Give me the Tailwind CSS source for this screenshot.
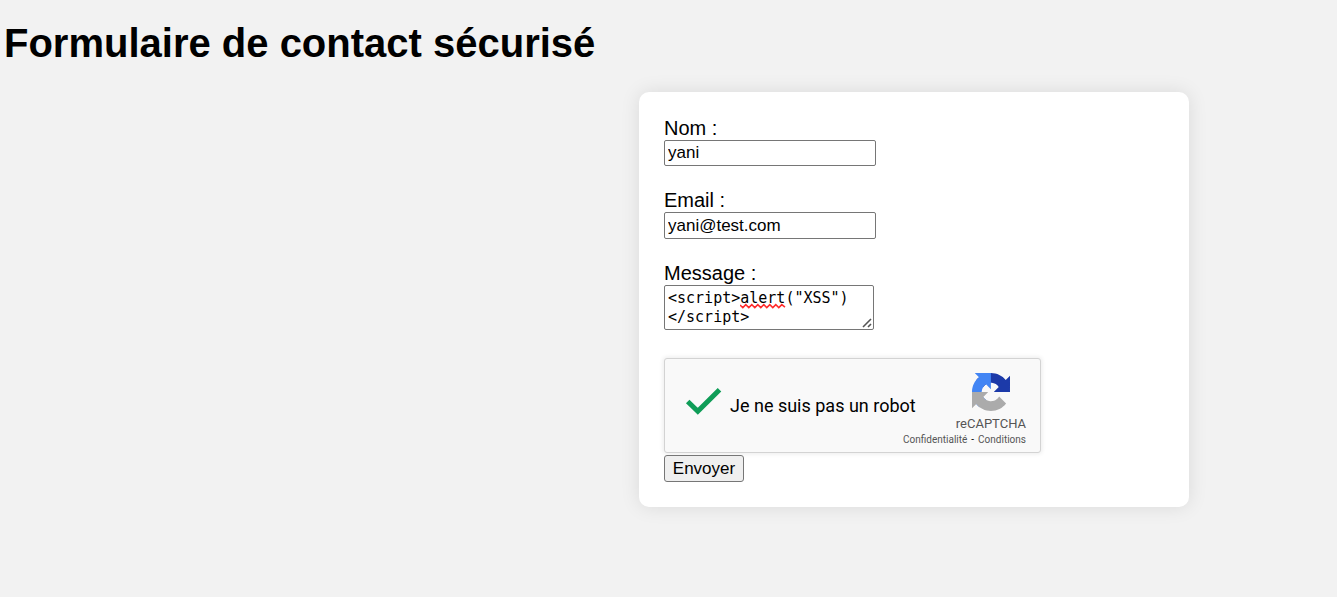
<!DOCTYPE html>
<html lang="fr">
<head>
<meta charset="utf-8">
<meta name="viewport" content="width=device-width, initial-scale=1">
<title>Formulaire de contact sécurisé</title>
<script src="https://cdn.jsdelivr.net/npm/@tailwindcss/browser@4"></script>
</head>
<body class="min-h-screen bg-[#f2f2f2] font-['Liberation_Sans',Arial,sans-serif] text-xl leading-[23px] text-black">
  <h1 class="px-1 pt-5 text-[40px] leading-[46px] font-bold">Formulaire de contact sécurisé</h1>
  <form class="mt-[26px] mr-[148px] ml-auto flex max-w-[550px] flex-col items-start rounded-[10px] bg-white p-[25px] shadow-[0_0_19px_rgba(0,0,0,0.1)]">
    <label for="nom">Nom :</label>
    <input id="nom" type="text" value="yani" class="h-[26px] w-[212px] rounded-xs border border-[#767676] bg-white px-[3px] text-[17px]">

    <label for="email" class="mt-[23px]">Email :</label>
    <input id="email" type="email" value="yani@test.com" class="h-[27px] w-[212px] rounded-xs border border-[#767676] bg-white px-[3px] text-[17px]">

    <label for="message" class="mt-[23px]">Message :</label>
    <div class="relative">
      <textarea id="message" rows="2" spellcheck="false" class="block h-[45px] w-[210px] resize-none overflow-hidden rounded-xs border border-[#767676] bg-white px-[3px] py-[3px] font-['DejaVu_Sans_Mono',monospace] text-[15px] leading-[19px]">&lt;script&gt;alert("XSS")
&lt;/script&gt;</textarea>
      <!-- spelling underline -->
      <svg class="pointer-events-none absolute top-[18px] left-[76px]" width="46" height="6" viewBox="0 0 46 6" fill="none" stroke="#ff2b2b" stroke-width="1.5"><path d="M0 2L2.8 4.6L5.8 1.6L8.8 4.6L11.8 1.6L14.8 4.6L17.8 1.6L20.8 4.6L23.8 1.6L26.8 4.6L29.8 1.6L32.8 4.6L35.8 1.6L38.8 4.6L41.8 1.6L45 4.2"/></svg>
      <!-- resize grip -->
      <svg class="pointer-events-none absolute right-[2px] bottom-[2px]" width="10" height="10" viewBox="0 0 10 10" fill="none" stroke="#555" stroke-width="1.6"><path d="M1 9L9 1M6 9L9 6"/></svg>
    </div>

    <div class="mt-7 flex h-[95px] w-[377px] max-w-full justify-between rounded-[3px] border border-[#d3d3d3] bg-[#f9f9f9] pr-[14px] pl-[20px] font-[Roboto,sans-serif] shadow-[0_0_4px_1px_rgba(0,0,0,0.08)]">
      <div class="flex items-center">
        <span class="relative block h-[30px] w-[37px] -translate-y-1">
          <input id="robot" type="checkbox" checked class="block h-full w-full appearance-none">
          <svg class="pointer-events-none absolute inset-0" width="37" height="30" viewBox="0 0 37 30" fill="none" stroke="#0f9d58" stroke-width="5"><path d="M2.7 14.5L12.8 24.2L34.5 2.7"/></svg>
        </span>
        <label for="robot" class="pl-2 text-lg leading-6 whitespace-nowrap">Je ne suis pas un robot</label>
      </div>
      <div class="-ml-10 flex flex-col items-end pt-[14px] text-[#555]">
        <svg class="mr-4" width="38" height="38" viewBox="0 0 64 64" aria-hidden="true">
          <path fill="#1c3aa9" d="M64 31.955l-.033-1.37V4.687l-7.16 7.16C50.948 4.674 42.033.093 32.05.093c-10.39 0-19.622 4.96-25.458 12.64l11.736 11.86a15.55 15.55 0 0 1 4.754-5.334c2.05-1.6 4.952-2.906 8.968-2.906.485 0 .86.057 1.135.163 4.976.393 9.288 3.14 11.828 7.124l-8.307 8.307L64 31.953"/>
          <path fill="#4285f4" d="M31.862.094l-1.37.033H4.594l7.16 7.16C4.58 13.147 0 22.06 0 32.046c0 10.39 4.96 19.622 12.64 25.458L24.5 45.768a15.55 15.55 0 0 1-5.334-4.754c-1.6-2.05-2.906-4.952-2.906-8.968 0-.485.057-.86.163-1.135.393-4.976 3.14-9.288 7.124-11.828l8.307 8.307L31.86.095"/>
          <path fill="#ababab" d="M.001 32.045l.033 1.37v25.898l7.16-7.16c5.86 7.173 14.774 11.754 24.76 11.754 10.39 0 19.622-4.96 25.458-12.64l-11.736-11.86a15.55 15.55 0 0 1-4.754 5.334c-2.05 1.6-4.952 2.906-8.968 2.906-.485 0-.86-.057-1.135-.163-4.976-.393-9.288-3.14-11.828-7.124l8.307-8.307c-10.522.04-22.4.066-27.295-.005"/>
        </svg>
        <span class="mt-1 text-[13px] leading-[17px]">reCAPTCHA</span>
        <span class="flex gap-1 text-[10px] leading-4"><a href="#">Confidentialité</a><span class="text-black">-</span><a href="#">Conditions</a></span>
      </div>
    </div>

    <button type="submit" class="mt-[2px] h-[27px] w-20 rounded-[3px] border border-[#767676] bg-[#efefef] text-[17px] leading-5">Envoyer</button>
  </form>
</body>
</html>
